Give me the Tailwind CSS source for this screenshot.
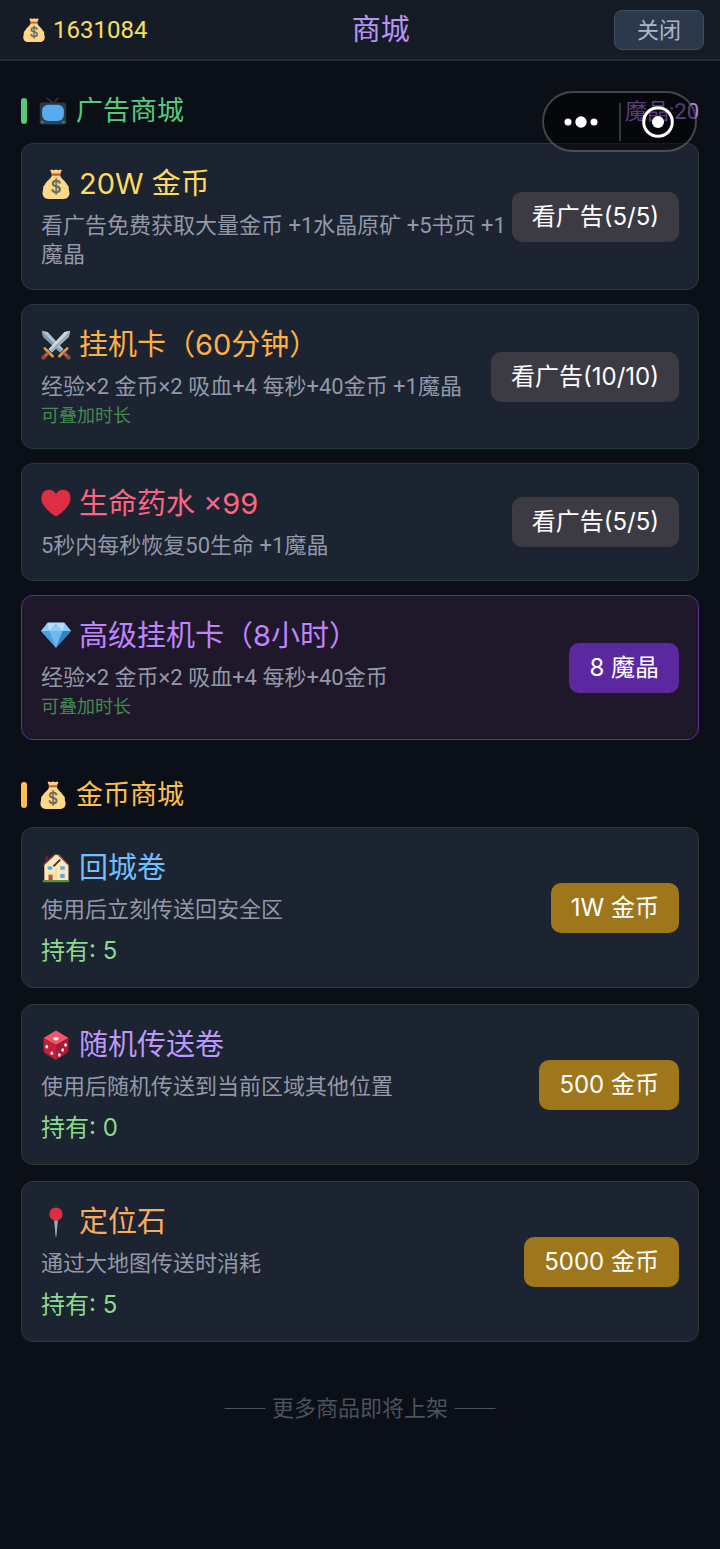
<!DOCTYPE html>
<html lang="zh-CN">
<head>
  <meta charset="UTF-8">
  <meta name="viewport" content="width=device-width, initial-scale=1.0">
  <title>商城</title>
  <script src="https://cdn.jsdelivr.net/npm/@tailwindcss/browser@4"></script>
</head>
<body class="relative min-h-screen bg-[#0b0f17] font-['Inter','Noto_Sans_CJK_SC',sans-serif] text-white">

  <!-- shared icon -->
  <svg class="hidden">
    <symbol id="money-bag" viewBox="0 0 36 36">
      <path d="M11 1.500 L13 0.500 L15 1.500 L18 0.500 L21 1.500 L23 0.500 L25 1.500 L22.500 7 H13.500 Z" fill="#fbd38a"/>
      <path d="M13.500 7 C12 12 7 14 4.500 19 C1.500 21 3.500 24 2 27 C1 32 4 36 9 36 H27 C32 36 35 32 34 27 C32.500 24 34.500 21 31.500 19 C29 14 24 12 22.500 7 Z" fill="#fdd888"/>
      <rect x="12" y="5.500" width="12" height="2.600" rx="1.300" fill="#c9572f"/>
      <text x="18" y="29" text-anchor="middle" font-family="Inter" font-size="20" fill="#67665c" stroke="#67665c" stroke-width="0.600">$</text>
    </symbol>
  </svg>

  <header class="flex h-[61px] items-center justify-between border-b-2 border-[#242c38] bg-[#151c26] pl-[22px] pr-4">
    <div class="flex items-center gap-[7px] font-['Roboto','Noto_Sans_CJK_SC',sans-serif] text-2xl text-[#f6e05e]">
      <svg class="size-6"><use href="#money-bag"/></svg>
      <span>1631084</span>
    </div>
    <h1 class="text-[29px] leading-10 text-[#b794f4]">商城</h1>
    <button type="button" class="h-10 w-[90px] rounded-lg border border-[#3f4e64] bg-[#2d384a] text-[22px] leading-none text-[#a9b9cb]">关闭</button>
  </header>

  <main class="px-[21px] pt-[29px]">
    <section>
      <div class="mb-[11px] flex h-[42px] items-center">
        <span class="mr-3 h-[26px] w-[6px] rounded-sm bg-[#56c97c]"></span>
        <svg class="mr-[9px] size-7" viewBox="0 0 36 36">
          <path d="M10 1 L18 8 L25 1" fill="none" stroke="#3b3a42" stroke-width="1.600"/>
          <rect x="1" y="7" width="34" height="28" rx="3" fill="#31373d"/>
          <rect x="1" y="30" width="34" height="5" rx="2" fill="#2a4356"/>
          <rect x="4" y="10" width="28" height="21" rx="8" fill="#55acee"/>
          <circle cx="4.500" cy="32" r="1.600" fill="#66757f"/>
          <circle cx="31.500" cy="32" r="1.600" fill="#66757f"/>
        </svg>
        <h2 class="text-[27px] text-[#56c97c]">广告商城</h2>
        <span class="ml-auto font-['Roboto','Noto_Sans_CJK_SC',sans-serif] text-[22px] text-[#b57bee]">魔晶:20</span>
      </div>

      <div class="flex flex-col gap-[14px]">
        <article class="flex items-center justify-between rounded-xl border border-[#263a3a] bg-[#1c2331] px-[19px] py-5">
          <div>
            <h3 class="mb-2 flex h-[39px] items-center gap-2 text-[29px] text-[#fddb5c]">
              <svg class="size-[30px]"><use href="#money-bag"/></svg>
              20W 金币
            </h3>
            <p class="font-['Roboto','Noto_Sans_CJK_SC',sans-serif] text-[22px] leading-[29px] text-[#9298a8]">看广告免费获取大量金币 +1水晶原矿 +5书页 +1魔晶</p>
          </div>
          <button type="button" class="h-[50px] shrink-0 rounded-[10px] bg-[#3c3b44] px-5 text-2xl">看广告(5/5)</button>
        </article>

        <article class="flex items-center justify-between rounded-xl border border-[#263a3a] bg-[#1c2331] px-[19px] py-5">
          <div>
            <h3 class="mb-2 flex h-[39px] items-center gap-2 text-[29px] text-[#ffb043]">
              <svg class="size-[30px]" viewBox="0 0 36 36">
                <path d="M1 1 L8 2.500 L27 23 L23 27 L2.500 8 Z" fill="#b4c4ce"/>
                <path d="M1 1 L25 25 L23 27 L2.500 8 Z" fill="#8a9ba8"/>
                <path d="M35 1 L28 2.500 L9 23 L13 27 L33.500 8 Z" fill="#ccd9e2"/>
                <path d="M35 1 L11 25 L13 27 L33.500 8 Z" fill="#99abb8"/>
                <path d="M4.500 22 L14 31.500 M31.500 22 L22 31.500" stroke="#e8a33c" stroke-width="3" stroke-linecap="round"/>
                <path d="M9 27 L3.500 32.500 M27 27 L32.500 32.500" stroke="#b0604a" stroke-width="4"/>
                <circle cx="3" cy="33" r="2.600" fill="#9c4038"/>
                <circle cx="33" cy="33" r="2.600" fill="#9c4038"/>
              </svg>
              挂机卡（60分钟）
            </h3>
            <p class="font-['Roboto','Noto_Sans_CJK_SC',sans-serif] text-[22px] leading-[29px] text-[#9298a8]">经验×2 金币×2 吸血+4 每秒+40金币 +1魔晶</p>
            <p class="mt-[2px] text-lg leading-[25px] text-[#448a50]">可叠加时长</p>
          </div>
          <button type="button" class="h-[50px] shrink-0 rounded-[10px] bg-[#3c3b44] px-5 text-2xl">看广告(10/10)</button>
        </article>

        <article class="flex items-center justify-between rounded-xl border border-[#263a3a] bg-[#1c2331] px-[19px] py-5">
          <div>
            <h3 class="mb-2 flex h-[39px] items-center gap-2 text-[29px] text-[#ff6480]">
              <svg class="size-[30px]" viewBox="0 0 36 36">
                <path d="M18 33 C11 29 0.500 20 0.500 11 C0.500 5 4.500 1 9.500 1 C13 1 16.500 3 18 6 C19.500 3 23 1 26.500 1 C31.500 1 35.500 5 35.500 11 C35.500 20 25 29 18 33 Z" fill="#dd2e44"/>
              </svg>
              生命药水 ×99
            </h3>
            <p class="font-['Roboto','Noto_Sans_CJK_SC',sans-serif] text-[22px] leading-[29px] text-[#9298a8]">5秒内每秒恢复50生命 +1魔晶</p>
          </div>
          <button type="button" class="h-[50px] shrink-0 rounded-[10px] bg-[#3c3b44] px-5 text-2xl">看广告(5/5)</button>
        </article>

        <article class="flex items-center justify-between rounded-xl border border-[#5b3391] bg-[#1f182a] px-[19px] py-5">
          <div>
            <h3 class="mb-2 flex h-[39px] items-center gap-2 text-[29px] text-[#c084fc]">
              <svg class="size-[30px]" viewBox="0 0 36 36">
                <path d="M8 2 H28 L36 12 L18 32 L0 12 Z" fill="#5dadec"/>
                <path d="M8 2 H28 L36 12 H0 Z" fill="#8ccaf7"/>
                <path d="M8 2 L10 12 L18 2 L26 12 L28 2 Z" fill="#bdddf4"/>
                <path d="M10 12 H26 L18 32 Z" fill="#6fb7ef"/>
                <path d="M26 12 H36 L18 32 Z" fill="#2b86c9"/>
                <path d="M0 12 H10 L18 32 Z" fill="#4a9fe0"/>
              </svg>
              高级挂机卡（8小时）
            </h3>
            <p class="font-['Roboto','Noto_Sans_CJK_SC',sans-serif] text-[22px] leading-[29px] text-[#9298a8]">经验×2 金币×2 吸血+4 每秒+40金币</p>
            <p class="mt-[2px] text-lg leading-[25px] text-[#448a50]">可叠加时长</p>
          </div>
          <button type="button" class="h-[50px] shrink-0 rounded-[10px] bg-[#5b289f] px-5 text-2xl">8 魔晶</button>
        </article>
      </div>
    </section>

    <section class="mt-[34px]">
      <div class="mb-[11px] flex h-[42px] items-center">
        <span class="mr-3 h-[26px] w-[6px] rounded-sm bg-[#fdc04e]"></span>
        <svg class="mr-[9px] size-7"><use href="#money-bag"/></svg>
        <h2 class="text-[27px] text-[#fdc04e]">金币商城</h2>
      </div>

      <div class="flex flex-col gap-4">
        <article class="flex items-center justify-between rounded-xl border border-[#343630] bg-[#1c2331] px-[19px] py-5">
          <div>
            <h3 class="mb-2 flex h-[39px] items-center gap-2 text-[29px] text-[#70c0ff]">
              <svg class="size-[30px]" viewBox="0 0 36 36">
                <path d="M4 13 L16 2 L22 2 L33 14 V34 H4 Z" fill="#ffe8b6"/>
                <path d="M5 3 H9 V8 L5 12 Z" fill="#66212e"/>
                <path d="M2.500 15 L17 1.500 L20 1.500 L34 15" fill="none" stroke="#7b3a40" stroke-width="1.300"/>
                <path d="M15 16 L23 8" stroke="#3e2c32" stroke-width="2.200"/>
                <rect x="8" y="16" width="5.500" height="4" fill="#55acee"/>
                <rect x="23" y="16" width="5.500" height="4" fill="#55acee"/>
                <rect x="23" y="25" width="5.500" height="5" fill="#55acee"/>
                <path d="M18 18 V33" stroke="#e6c98e" stroke-width="1"/>
                <rect x="9" y="26" width="5" height="7" fill="#b5503f"/>
                <rect x="2" y="32.500" width="32" height="2.500" rx="1" fill="#5c913b"/>
              </svg>
              回城卷
            </h3>
            <p class="font-['Roboto','Noto_Sans_CJK_SC',sans-serif] text-[22px] leading-[29px] text-[#9298a8]">使用后立刻传送回安全区</p>
            <p class="mt-[10px] text-2xl leading-[33px] text-[#8bdb8d]">持有: 5</p>
          </div>
          <button type="button" class="h-[50px] shrink-0 rounded-[10px] bg-[#9e761c] px-5 text-2xl">1W 金币</button>
        </article>

        <article class="flex items-center justify-between rounded-xl border border-[#343630] bg-[#1c2331] px-[19px] py-5">
          <div>
            <h3 class="mb-2 flex h-[39px] items-center gap-2 text-[29px] text-[#bb98fa]">
              <svg class="size-[30px]" viewBox="0 0 36 36">
                <path d="M18 0.500 L33 9.500 L18 18 L3 9.500 Z" fill="#f4566b"/>
                <path d="M3 9.500 L18 18 V36 L5 28 Q3 27 3 24 Z" fill="#c5203a"/>
                <path d="M33 9.500 L18 18 V36 L31 28 Q33 27 33 24 Z" fill="#a81d35"/>
                <ellipse cx="18" cy="10.500" rx="3" ry="2" fill="#fff"/>
                <g fill="#fff">
                  <ellipse cx="7" cy="20" rx="1.600" ry="2.100"/>
                  <ellipse cx="13" cy="28" rx="1.600" ry="2.100"/>
                  <ellipse cx="29.500" cy="18" rx="1.600" ry="2.100"/>
                  <ellipse cx="26" cy="24" rx="1.600" ry="2.100"/>
                  <ellipse cx="22" cy="30" rx="1.600" ry="2.100"/>
                </g>
              </svg>
              随机传送卷
            </h3>
            <p class="font-['Roboto','Noto_Sans_CJK_SC',sans-serif] text-[22px] leading-[29px] text-[#9298a8]">使用后随机传送到当前区域其他位置</p>
            <p class="mt-[10px] text-2xl leading-[33px] text-[#8bdb8d]">持有: 0</p>
          </div>
          <button type="button" class="h-[50px] shrink-0 rounded-[10px] bg-[#9e761c] px-5 text-2xl">500 金币</button>
        </article>

        <article class="flex items-center justify-between rounded-xl border border-[#343630] bg-[#1c2331] px-[19px] py-5">
          <div>
            <h3 class="mb-2 flex h-[39px] items-center gap-2 text-[29px] text-[#fbab5e]">
              <svg class="size-[30px]" viewBox="0 0 36 36">
                <path d="M15.500 14 H20.500 L18.500 35 Q18 37 17.500 35 Z" fill="#99aab5"/>
                <circle cx="18" cy="8.500" r="8" fill="#dd2e44"/>
              </svg>
              定位石
            </h3>
            <p class="font-['Roboto','Noto_Sans_CJK_SC',sans-serif] text-[22px] leading-[29px] text-[#9298a8]">通过大地图传送时消耗</p>
            <p class="mt-[10px] text-2xl leading-[33px] text-[#8bdb8d]">持有: 5</p>
          </div>
          <button type="button" class="h-[50px] shrink-0 rounded-[10px] bg-[#9e761c] px-5 text-2xl">5000 金币</button>
        </article>
      </div>
    </section>

    <p class="py-12 text-center font-['Noto_Sans_CJK_SC',sans-serif] text-[22px] leading-8 text-[#4a525e]">—— 更多商品即将上架 ——</p>
  </main>

  <!-- floating mini-program capsule -->
  <div class="absolute right-[23px] top-[91px] flex h-[61px] w-[155px] items-center rounded-full border-2 border-white/25 bg-black/50">
    <button type="button" aria-label="更多" class="flex h-full flex-1 items-center justify-center">
      <svg class="h-3 w-9" viewBox="0 0 36 12" fill="#fff">
        <circle cx="5" cy="6" r="3.500"/>
        <circle cx="18" cy="6" r="5.700"/>
        <circle cx="31" cy="6" r="3.500"/>
      </svg>
    </button>
    <span class="h-[38px] w-[2px] bg-white/20"></span>
    <button type="button" aria-label="退出" class="flex h-full flex-1 items-center justify-center">
      <svg class="size-8" viewBox="0 0 32 32">
        <circle cx="16" cy="16" r="14.300" fill="none" stroke="#fff" stroke-width="3"/>
        <circle cx="16" cy="16" r="6" fill="#fff"/>
      </svg>
    </button>
  </div>
</body>
</html>
